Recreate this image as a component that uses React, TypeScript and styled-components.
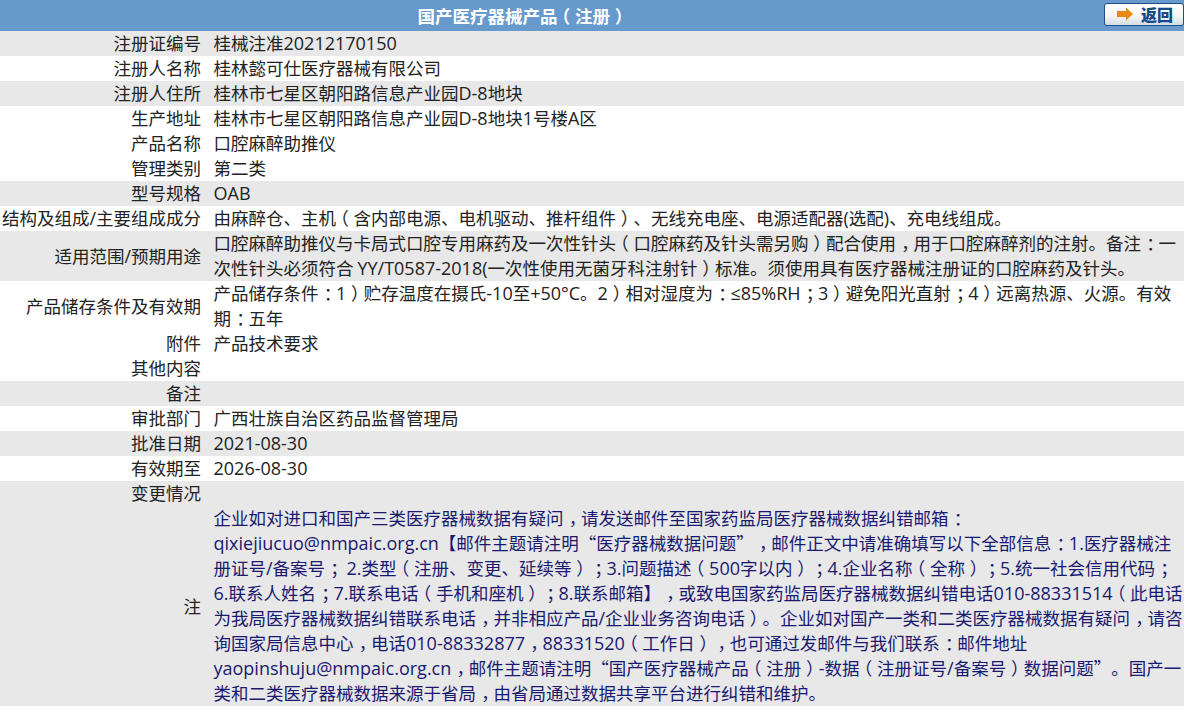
import React from "react";
import styled, { createGlobalStyle } from "styled-components";

const Global = createGlobalStyle`
  html, body { margin: 0; padding: 0; background: #fff; overflow: hidden; }
`;

const Page = styled.div`
  width: 1184px;
  font-family: "Noto Sans CJK SC", sans-serif;
  font-size: 17.5px;
  line-height: 25px;
  color: #222;
  text-spacing-trim: space-all;
`;

const TitleBar = styled.div`
  height: 31px;
  background: #6699cc;
  display: grid;
  grid-template-columns: 1045px 1fr;
  align-items: center;
`;

const Title = styled.div`
  text-align: center;
  color: #fff;
  font-weight: bold;
`;

const BackButton = styled.button`
  justify-self: end;
  margin: 0 0 3px 0;
  width: 80px;
  height: 23px;
  padding: 0 0 0 1px;
  display: flex;
  align-items: center;
  justify-content: center;
  gap: 7px;
  border: 1px solid #1d4f86;
  border-radius: 3px;
  background: linear-gradient(#ffffff, #f4f4f4 60%, #d4dce6);
  color: #154a8a;
  font-family: "Noto Sans CJK SC", sans-serif;
  font-size: 16px;
  line-height: 20px;
  font-weight: 900;
`;

const Row = styled.div<{ $shaded: boolean }>`
  display: grid;
  grid-template-columns: 201px 1fr;
  column-gap: 12.5px;
  align-items: center;
  background: ${(p) => (p.$shaded ? "#e8e8e8" : "#ffffff")};
`;

const Label = styled.div`
  text-align: right;
  white-space: nowrap;
  transform: translateY(-1px);
`;

const Value = styled.div`
  min-height: 25px;
  word-break: break-all;
  transform: translateY(-1px);
`;

const Notice = styled.div`
  color: #191970;
`;

const Latin = styled.span`
  font-family: "Open Sans", sans-serif;
  font-size: 18px;
  line-height: 0;
`;

/* A full-width mark: its glyph is moved to the middle of its 1em cell. */
const Mark = styled.span<{ $shift: number }>`
  display: inline-block;
  width: 1em;
  line-height: 0;
  transform: translateX(${(p) => p.$shift}em);
`;

const shifts: Record<string, number> = {
  "（": -0.27,
  "）": 0.27,
  "：": 0.3,
  "；": 0.3,
  "，": 0.3,
};

function Text({ children }: { children: string }) {
  return (
    <>
      {children.split(/([（）：；，]|[\x21-\x7e°≤]+(?: [\x21-\x7e]+)*)/).map((part, i) => {
        if (i % 2 === 0) return part;
        if (part in shifts)
          return (
            <Mark key={i} $shift={shifts[part]}>
              {part}
            </Mark>
          );
        return <Latin key={i}>{part}</Latin>;
      })}
    </>
  );
}

const rows: { label: string; value: string; shaded: boolean }[] = [
  { label: "注册证编号", value: "桂械注准20212170150", shaded: true },
  { label: "注册人名称", value: "桂林懿可仕医疗器械有限公司", shaded: false },
  { label: "注册人住所", value: "桂林市七星区朝阳路信息产业园D-8地块", shaded: true },
  { label: "生产地址", value: "桂林市七星区朝阳路信息产业园D-8地块1号楼A区", shaded: false },
  { label: "产品名称", value: "口腔麻醉助推仪", shaded: false },
  { label: "管理类别", value: "第二类", shaded: false },
  { label: "型号规格", value: "OAB", shaded: true },
  { label: "结构及组成/主要组成成分", value: "由麻醉仓、主机（含内部电源、电机驱动、推杆组件）、无线充电座、电源适配器(选配)、充电线组成。", shaded: false },
  { label: "适用范围/预期用途", value: "口腔麻醉助推仪与卡局式口腔专用麻药及一次性针头（口腔麻药及针头需另购）配合使用，用于口腔麻醉剂的注射。备注：一次性针头必须符合 YY/T0587-2018(一次性使用无菌牙科注射针）标准。须使用具有医疗器械注册证的口腔麻药及针头。", shaded: true },
  { label: "产品储存条件及有效期", value: "产品储存条件：1）贮存温度在摄氏-10至+50°C。2）相对湿度为：≤85%RH；3）避免阳光直射；4）远离热源、火源。有效期：五年", shaded: false },
  { label: "附件", value: "产品技术要求", shaded: false },
  { label: "其他内容", value: "", shaded: false },
  { label: "备注", value: "", shaded: true },
  { label: "审批部门", value: "广西壮族自治区药品监督管理局", shaded: false },
  { label: "批准日期", value: "2021-08-30", shaded: true },
  { label: "有效期至", value: "2026-08-30", shaded: false },
  { label: "变更情况", value: "", shaded: true },
];

export default function App() {
  return (
    <Page>
      <Global />
      <TitleBar>
        <Title>
          <Text>国产医疗器械产品（注册）</Text>
        </Title>
        <BackButton>
          <svg width="18" height="14" viewBox="0 0 18 14">
            <path d="M1 4h9V0.5l7 6.5-7 6.5V10H1z" fill="#e8890c" />
          </svg>
          返回
        </BackButton>
      </TitleBar>
      {rows.map((r) => (
        <Row key={r.label} $shaded={r.shaded}>
          <Label>
            <Text>{r.label}</Text>
          </Label>
          <Value>
            <Text>{r.value}</Text>
          </Value>
        </Row>
      ))}
      <Row $shaded>
        <Label>注</Label>
        <Value>
          <Notice>
            <Text>企业如对进口和国产三类医疗器械数据有疑问，请发送邮件至国家药监局医疗器械数据纠错邮箱：</Text>
            <br />
            <Text>qixiejiucuo@nmpaic.org.cn【邮件主题请注明“医疗器械数据问题”，邮件正文中请准确填写以下全部信息：1.医疗器械注册证号/备案号； 2.类型（注册、变更、延续等）；3.问题描述（500字以内）；4.企业名称（全称）；5.统一社会信用代码；6.联系人姓名；7.联系电话（手机和座机）；8.联系邮箱】，或致电国家药监局医疗器械数据纠错电话010-88331514（此电话为我局医疗器械数据纠错联系电话，并非相应产品/企业业务咨询电话）。企业如对国产一类和二类医疗器械数据有疑问，请咨询国家局信息中心，电话010-88332877，88331520（工作日），也可通过发邮件与我们联系：邮件地址</Text>
            <br />
            <Text>yaopinshuju@nmpaic.org.cn，邮件主题请注明“国产医疗器械产品（注册）-数据（注册证号/备案号）数据问题”。国产一类和二类医疗器械数据来源于省局，由省局通过数据共享平台进行纠错和维护。</Text>
          </Notice>
        </Value>
      </Row>
    </Page>
  );
}
